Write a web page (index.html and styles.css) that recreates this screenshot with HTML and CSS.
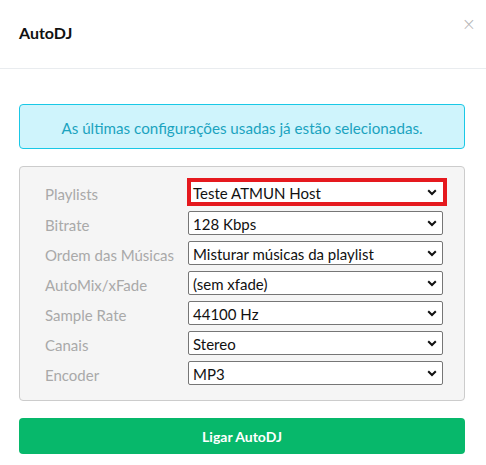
FILE: index.html
```html
<!DOCTYPE html>
<html lang="pt">
<head>
<meta charset="utf-8">
<link rel="stylesheet" href="styles.css">
</head>
<body>
<div class="modal">
  <div class="modal-header">
    <h5 class="modal-title">AutoDJ</h5>
    <span class="close">&times;</span>
  </div>
  <div class="modal-body">
    <div class="alert">As últimas configurações usadas já estão selecionadas.</div>
    <div class="panel">
      <div class="row first">
        <span class="label">Playlists</span>
        <div class="select highlight"><span class="val">Teste ATMUN Host</span><svg class="chev" viewBox="0 0 10 7" width="10" height="7"><path d="M1.2 1.2 L5 5 L8.8 1.2" fill="none" stroke="#111" stroke-width="2"/></svg></div>
      </div>
      <div class="row">
        <span class="label">Bitrate</span>
        <div class="select"><span class="val">128 Kbps</span><svg class="chev" viewBox="0 0 10 7" width="10" height="7"><path d="M1.2 1.2 L5 5 L8.8 1.2" fill="none" stroke="#111" stroke-width="2"/></svg></div>
      </div>
      <div class="row">
        <span class="label">Ordem das Músicas</span>
        <div class="select"><span class="val">Misturar músicas da playlist</span><svg class="chev" viewBox="0 0 10 7" width="10" height="7"><path d="M1.2 1.2 L5 5 L8.8 1.2" fill="none" stroke="#111" stroke-width="2"/></svg></div>
      </div>
      <div class="row">
        <span class="label">AutoMix/xFade</span>
        <div class="select"><span class="val">(sem xfade)</span><svg class="chev" viewBox="0 0 10 7" width="10" height="7"><path d="M1.2 1.2 L5 5 L8.8 1.2" fill="none" stroke="#111" stroke-width="2"/></svg></div>
      </div>
      <div class="row">
        <span class="label">Sample Rate</span>
        <div class="select"><span class="val">44100 Hz</span><svg class="chev" viewBox="0 0 10 7" width="10" height="7"><path d="M1.2 1.2 L5 5 L8.8 1.2" fill="none" stroke="#111" stroke-width="2"/></svg></div>
      </div>
      <div class="row">
        <span class="label">Canais</span>
        <div class="select"><span class="val">Stereo</span><svg class="chev" viewBox="0 0 10 7" width="10" height="7"><path d="M1.2 1.2 L5 5 L8.8 1.2" fill="none" stroke="#111" stroke-width="2"/></svg></div>
      </div>
      <div class="row">
        <span class="label">Encoder</span>
        <div class="select"><span class="val">MP3</span><svg class="chev" viewBox="0 0 10 7" width="10" height="7"><path d="M1.2 1.2 L5 5 L8.8 1.2" fill="none" stroke="#111" stroke-width="2"/></svg></div>
      </div>
    </div>
    <button class="btn">Ligar AutoDJ</button>
  </div>
</div>
</body>
</html>
```
FILE: styles.css
```css
* { box-sizing: border-box; }
html, body { margin: 0; padding: 0; background: #fff; }
body {
  font-family: Lato, "Liberation Sans", sans-serif;
  color: #212529;
  width: 486px;
  height: 465px;
  overflow: hidden;
}
.modal { width: 486px; }
.modal-header {
  height: 69px;
  border-bottom: 1px solid #e9ecef;
  display: flex;
  align-items: flex-start;
  justify-content: space-between;
  padding: 23px 10px 0 19px;
}
.modal-title {
  margin: 0;
  font-size: 16px;
  font-weight: 700;
  color: #111;
  line-height: 20px;
}
.close {
  color: #b5b5b5;
  font-size: 17px;
  line-height: 1;
  margin-top: -7px;
  font-family: "DejaVu Sans", sans-serif;
  font-weight: 300;
}
.modal-body { padding: 35px 21px 0 19px; }
.alert {
  height: 45px;
  background: #cff4fc;
  border: 1px solid #19c8e6;
  border-radius: 4px;
  color: #1ba3bf;
  font-size: 15.2px;
  padding-top: 2px;
  display: flex;
  align-items: center;
  justify-content: center;
}
.panel {
  margin-top: 17px;
  background: #f5f5f5;
  border: 1px solid #cccccc;
  border-radius: 4px;
  height: 235px;
  padding: 11px 0 0 25px;
  display: flex;
  flex-direction: column;
  gap: 6px;
}
.row {
  display: flex;
  align-items: center;
  height: 24px;
}
.row.first { height: 28px; margin-bottom: -1px; }
.label {
  width: 143px;
  color: #a9a9a9;
  font-size: 15px;
  padding-top: 3px;
}
.select {
  width: 255px;
  height: 24px;
  border: 1px solid #767676;
  border-radius: 2px;
  background: #fff;
  display: flex;
  align-items: center;
  justify-content: space-between;
  padding: 0 5px 0 4px;
  font-size: 15px;
  color: #111;
}
.val { padding-top: 2px; }
.select.highlight {
  width: 260px;
  height: 28px;
  margin-left: -1px;
  border: 4px solid #e5191e;
  border-radius: 0;
  padding: 0 6px 0 2px;
}
.chev { display: block; }
.btn {
  margin-top: 17px;
  width: 446px;
  height: 36px;
  border: 0;
  border-radius: 4px;
  background: #07b86b;
  color: #fff;
  font-family: Lato, "Liberation Sans", sans-serif;
  font-weight: 700;
  font-size: 14px;
  padding-top: 2px;
  display: block;
}
```
